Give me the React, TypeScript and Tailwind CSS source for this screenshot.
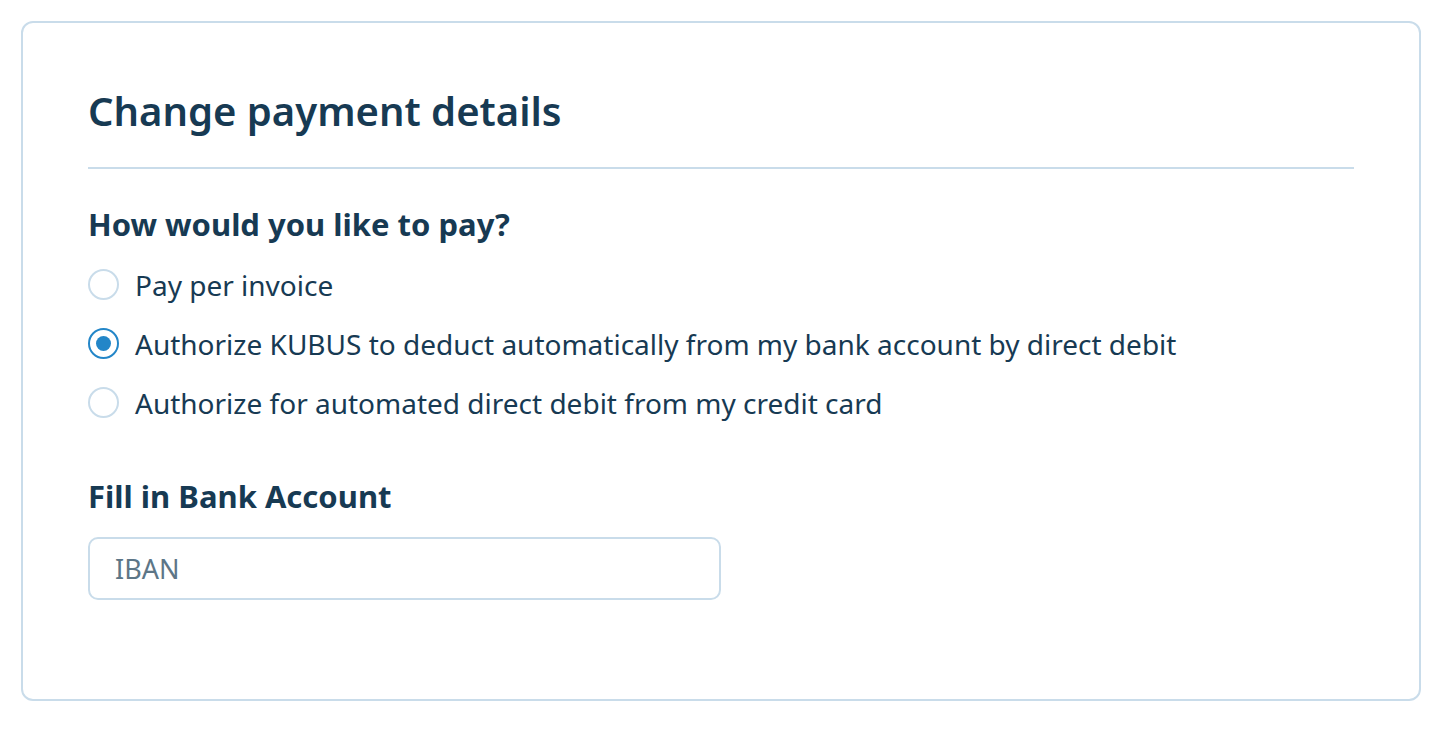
import { useState } from 'react';

const options = [
  { id: 'invoice', label: 'Pay per invoice' },
  { id: 'bank', label: 'Authorize KUBUS to deduct automatically from my bank account by direct debit' },
  { id: 'card', label: 'Authorize for automated direct debit from my credit card' },
];

function Radio({ checked }: { checked: boolean }) {
  return (
    <span
      className={
        checked
          ? 'w-[31px] h-[31px] rounded-full border-2 border-[#2386c8] flex items-center justify-center flex-shrink-0 bg-white'
          : 'w-[31px] h-[31px] rounded-full border-2 border-[#c9dcea] flex-shrink-0 bg-white'
      }
    >
      {checked && <span className="w-[15px] h-[15px] rounded-full bg-[#2386c8]" />}
    </span>
  );
}

export default function App() {
  const [method, setMethod] = useState('bank');

  return (
    <div className="min-h-screen bg-white p-[21px] font-['Noto_Sans',sans-serif] text-[#173a53]">
      <div className="w-[1400px] border-2 border-[#c9dcea] rounded-[12px] px-[65px] pt-[66px] h-[680px]">
        <h1 className="text-[40px] font-semibold leading-[44px]">Change payment details</h1>
        <div className="mt-[34px] h-[2px] bg-[#c9dcea]" />

        <h2 className="mt-[37px] text-[31px] font-bold leading-[36px]">How would you like to pay?</h2>
        <div className="mt-[13px] flex flex-col">
          {options.map((o) => (
            <label
              key={o.id}
              className="h-[59px] flex items-center gap-[16px] cursor-pointer"
              onClick={() => setMethod(o.id)}
            >
              <Radio checked={method === o.id} />
              <span className="text-[28px] leading-[34px]">{o.label}</span>
            </label>
          ))}
        </div>

        <h2 className="mt-[46px] text-[31px] font-bold leading-[36px]">Fill in Bank Account</h2>
        <input
          placeholder="IBAN"
          className="mt-[23px] block w-[633px] h-[63px] px-[25px] border-2 border-[#c9dcea] rounded-[10px] text-[27px] placeholder:text-[#5d7687] outline-none"
        />
      </div>
    </div>
  );
}
